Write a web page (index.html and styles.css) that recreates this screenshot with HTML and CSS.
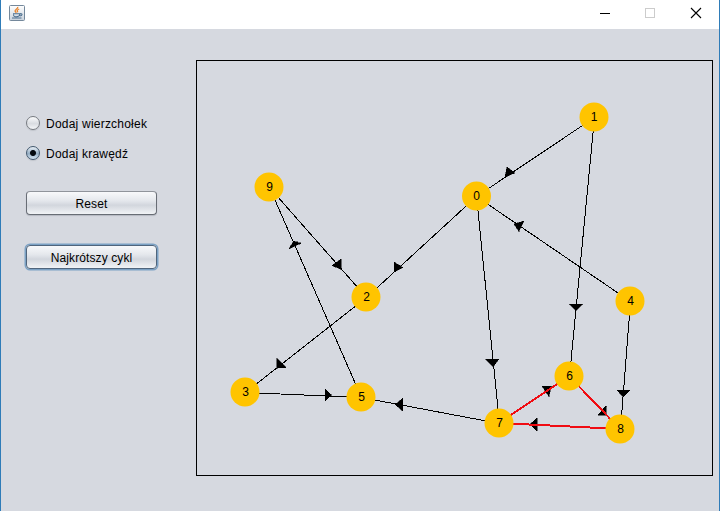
FILE: index.html
```html
<!DOCTYPE html>
<html lang="pl">
<head>
<meta charset="utf-8">
<title>Graf</title>
<link rel="stylesheet" href="styles.css">
</head>
<body>
<div class="window">
  <header class="titlebar">
    <svg class="app-icon" width="16" height="16" viewBox="0 0 16 16">
      <defs><linearGradient id="tile" x1="0" y1="0" x2="0" y2="1"><stop offset="0" stop-color="#fff"/><stop offset="1" stop-color="#c9d2dc"/></linearGradient></defs>
      <rect x=".5" y=".5" width="15" height="15" rx="1" fill="url(#tile)" stroke="#74889b"/>
      <path d="M8.800 1.800C9.200 4 5.400 4.400 6.100 6.200L7.300 7.800M10.200 4C7.600 5 8 5.800 8.800 7.300" fill="none" stroke="#e8842c" stroke-width="1.300"/>
      <path d="M4 8.700H11.300M4.500 9.500C4.700 12 5.300 11.700 7.500 11.700S10.600 11.500 11 9M11.200 8.700C14 8.300 13.300 10.800 10.800 11M3 13H12.500" fill="none" stroke="#4c6f8f" stroke-width="1.100"/>
    </svg>
    <div class="controls">
      <svg width="12" height="12" viewBox="0 0 12 12" shape-rendering="crispEdges"><path d="M2 6.500H12" stroke="#000"/></svg>
      <svg width="12" height="12" viewBox="0 0 12 12" shape-rendering="crispEdges"><rect x="1.500" y="1.500" width="9" height="9" fill="none" stroke="#ccc"/></svg>
      <svg width="12" height="12" viewBox="0 0 12 12"><path d="M1 1L11 11M11 1L1 11" stroke="#000" stroke-width="1.100"/></svg>
    </div>
  </header>
  <main class="content">
    <aside class="sidebar">
      <label class="option"><span class="radio"></span><span class="option-text">Dodaj wierzchołek</span></label>
      <label class="option"><span class="radio selected"></span><span class="option-text">Dodaj krawędź</span></label>
      <button class="button reset">Reset</button>
      <button class="button focused">Najkrótszy cykl</button>
    </aside>
    <svg class="graph" width="517" height="416" viewBox="197 61 515 414">
      <g class="edges" transform="translate(.5 .5)">
        <path d="M594 117L476 196M594 117L569 376M630 301L476 196M476 196L499 423M476 196L366 297M269 187L366 297M361 397L269 187M366 297L245 392M245 392L361 397M499 423L361 397M630 301L620 429"/>
      </g>
      <g class="arrows">
        <path d="M507 167L515 173L505 177Z"/>
        <path d="M524 221L519 231.500L514 224Z"/>
        <path d="M289 249L293.500 241L301 243.300Z"/>
        <path d="M341 259V269.500L332 265.500Z"/>
        <path d="M394 262L403 267.500L394 272Z"/>
        <path d="M277 358L286 367.500L276.500 368Z"/>
        <path d="M325 389L331.500 395L325 401Z"/>
        <path d="M403 398L395.300 404.500L402.500 411Z"/>
        <path d="M485.500 359H499L493 367Z"/>
        <path d="M569 304H582.500L576 311Z"/>
        <path d="M617 390H630.300L623 397Z"/>
        <path d="M542 386H551.500L549 396.500Z"/>
        <path d="M606 405.500V415H598Z"/>
        <path d="M537 418L530 424.300L537 431Z"/>
      </g>
      <path class="cycle" d="M499 423L569 376L620 429Z"/>
      <g class="nodes">
        <circle cx="476.500" cy="196" r="14.500"/><circle cx="594" cy="117" r="14.500"/><circle cx="366" cy="297" r="14.500"/><circle cx="245" cy="392" r="14.500"/><circle cx="630" cy="301" r="14.500"/><circle cx="361" cy="397" r="14.500"/><circle cx="569" cy="376" r="14.500"/><circle cx="499" cy="423" r="14.500"/><circle cx="620" cy="429" r="14.500"/><circle cx="269" cy="187" r="14.500"/>
      </g>
      <g class="labels">
        <text x="476.500" y="200">0</text><text x="594" y="121">1</text><text x="366.500" y="301">2</text><text x="245.500" y="396">3</text><text x="630.500" y="305">4</text><text x="361.500" y="401">5</text><text x="569.500" y="380">6</text><text x="499.500" y="427">7</text><text x="620.500" y="433">8</text><text x="269.500" y="191">9</text>
      </g>
    </svg>
  </main>
</div>
</body>
</html>
```
FILE: styles.css
```css
* { box-sizing: border-box; }
body { margin: 0; font: 12px "Liberation Sans", Arial, sans-serif; color: #000; overflow: hidden; }
.window { width: 720px; height: 511px; display: flex; flex-direction: column; background: #d6d9e0; border: solid #2f7cb8; border-width: 0 1px; }
.titlebar { height: 29px; flex: none; display: flex; justify-content: space-between; background: #fff; padding: 5px 17px 0 8px; }
.app-icon { display: block; }
.controls { display: flex; gap: 34px; padding-top: 2px; }
.controls svg { display: block; }
.content { display: flex; flex: 1; }
.sidebar { width: 195px; padding: 86px 0 0 25px; display: flex; flex-direction: column; align-items: flex-start; }
.option { height: 16px; margin-bottom: 14px; display: flex; align-items: center; gap: 6px; }
.option-text { letter-spacing: .22px; white-space: nowrap; padding-top: 1px; }
.radio { width: 14px; height: 14px; border-radius: 50%; border: 1px solid #777b81; background: linear-gradient(#fafbfc, #d9dce1 55%, #f4f6f8); box-shadow: 0 1px 1px #bfc3ca; }
.radio.selected { border-color: #42586e; background: radial-gradient(circle, #050a10 0 2.500px, transparent 3.500px), linear-gradient(#e8f0f7, #95adc3 55%, #d5e5f2); }
.button { width: 131px; height: 24px; margin: 0 0 30px; padding: 2px 0 0; border: 1px solid #686d75; border-top-color: #90949b; border-radius: 4px; background: linear-gradient(#f8f9fb, #e4e7ec 40%, #d2d6dd 60%, #f1f3f6); font: inherit; color: #000; letter-spacing: .1px; box-shadow: 0 1px 1px #b5b9c1; }
.reset { margin-top: 16px; }
.focused { border-color: #50657c; box-shadow: 0 0 0 1.500px #7ba1c4; }
.graph { margin-top: 31px; border: 1px solid #000; display: block; }
.edges { stroke: #000; stroke-width: 1; fill: none; shape-rendering: crispEdges; }
.arrows { fill: #000; stroke: #000; stroke-width: .5; shape-rendering: crispEdges; }
.cycle { stroke: #f00c12; stroke-width: 2; fill: none; shape-rendering: crispEdges; }
.nodes { fill: #ffc400; }
.labels { font-size: 12px; text-anchor: middle; }
```
